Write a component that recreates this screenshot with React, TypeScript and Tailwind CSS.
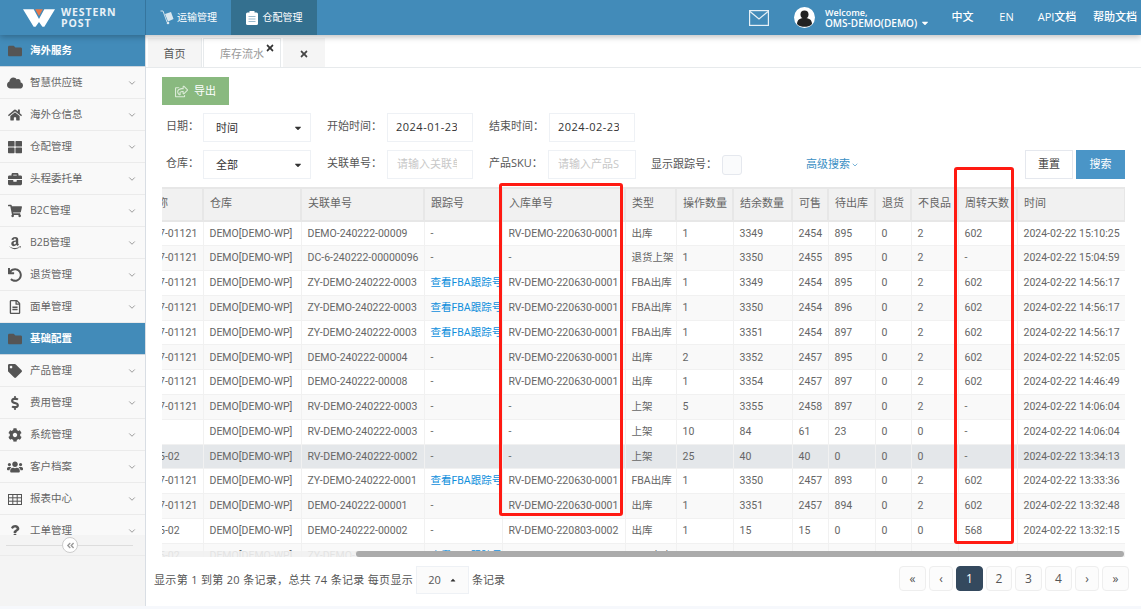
import {
  FaFolder,
  FaCloud,
  FaHome,
  FaThLarge,
  FaBriefcase,
  FaShoppingCart,
  FaAmazon,
  FaUndo,
  FaRegFileAlt,
  FaTag,
  FaDollarSign,
  FaCog,
  FaUsers,
  FaQuestion,
  FaTimes,
  FaCaretDown,
  FaCaretUp,
  FaRegShareSquare,
  FaAngleDoubleLeft,
} from "react-icons/fa";
import { ChevronDown } from "lucide-react";

const font = { fontFamily: '"Open Sans","Noto Sans CJK SC",sans-serif' };
const tableFont = { fontFamily: 'Roboto,"Noto Sans CJK SC",sans-serif' };

function GridIcon() {
  return (
    <svg width="14" height="11" viewBox="0 0 14 11" fill="none" stroke="#555" strokeWidth="1">
      <rect x="0.500" y="0.500" width="13" height="10" />
      <path d="M0 3.800H14M0 7.200H14M4.800 0V11M9.200 0V11" />
    </svg>
  );
}

const menuTop = [
  { label: "智慧供应链", icon: <FaCloud className="text-[16px]" /> },
  { label: "海外仓信息", icon: <FaHome /> },
  { label: "仓配管理", icon: <FaThLarge /> },
  { label: "头程委托单", icon: <FaBriefcase /> },
  { label: "B2C管理", icon: <FaShoppingCart /> },
  { label: "B2B管理", icon: <FaAmazon /> },
  { label: "退货管理", icon: <FaUndo /> },
  { label: "面单管理", icon: <FaRegFileAlt /> },
];

const menuBottom = [
  { label: "产品管理", icon: <FaTag /> },
  { label: "费用管理", icon: <FaDollarSign /> },
  { label: "系统管理", icon: <FaCog /> },
  { label: "客户档案", icon: <FaUsers className="text-[16px]" /> },
  { label: "报表中心", icon: <GridIcon /> },
  { label: "工单管理", icon: <FaQuestion className="text-[12px]" /> },
];

const columns = [
  { label: "名称", width: 41 },
  { label: "仓库", width: 98 },
  { label: "关联单号", width: 123 },
  { label: "跟踪号", width: 78 },
  { label: "入库单号", width: 123 },
  { label: "类型", width: 51 },
  { label: "操作数量", width: 57 },
  { label: "结余数量", width: 59 },
  { label: "可售", width: 36 },
  { label: "待出库", width: 47 },
  { label: "退货", width: 36 },
  { label: "不良品", width: 47 },
  { label: "周转天数", width: 59 },
  { label: "时间", width: 108 },
];

const fba = "查看FBA跟踪号";
const wh = "DEMO[DEMO-WP]";
const rv1 = "RV-DEMO-220630-0001";

const rows: string[][] = [
  ["7-01121", wh, "DEMO-240222-00009", "-", rv1, "出库", "1", "3349", "2454", "895", "0", "2", "602", "2024-02-22 15:10:25"],
  ["7-01121", wh, "DC-6-240222-00000096", "-", "-", "退货上架", "1", "3350", "2455", "895", "0", "2", "-", "2024-02-22 15:04:59"],
  ["7-01121", wh, "ZY-DEMO-240222-0003", fba, rv1, "FBA出库", "1", "3349", "2454", "895", "0", "2", "602", "2024-02-22 14:56:17"],
  ["7-01121", wh, "ZY-DEMO-240222-0003", fba, rv1, "FBA出库", "1", "3350", "2454", "896", "0", "2", "602", "2024-02-22 14:56:17"],
  ["7-01121", wh, "ZY-DEMO-240222-0003", fba, rv1, "FBA出库", "1", "3351", "2454", "897", "0", "2", "602", "2024-02-22 14:56:17"],
  ["7-01121", wh, "DEMO-240222-00004", "-", rv1, "出库", "2", "3352", "2457", "895", "0", "2", "602", "2024-02-22 14:52:05"],
  ["7-01121", wh, "DEMO-240222-00008", "-", rv1, "出库", "1", "3354", "2457", "897", "0", "2", "602", "2024-02-22 14:46:49"],
  ["7-01121", wh, "RV-DEMO-240222-0003", "-", "-", "上架", "5", "3355", "2458", "897", "0", "2", "-", "2024-02-22 14:06:04"],
  ["", wh, "RV-DEMO-240222-0003", "-", "-", "上架", "10", "84", "61", "23", "0", "0", "-", "2024-02-22 14:06:04"],
  ["5-02", wh, "RV-DEMO-240222-0002", "-", "-", "上架", "25", "40", "40", "0", "0", "0", "-", "2024-02-22 13:34:13"],
  ["7-01121", wh, "ZY-DEMO-240222-0001", fba, rv1, "FBA出库", "1", "3350", "2457", "893", "0", "2", "602", "2024-02-22 13:33:36"],
  ["7-01121", wh, "DEMO-240222-00001", "-", rv1, "出库", "1", "3351", "2457", "894", "0", "2", "602", "2024-02-22 13:32:48"],
  ["5-02", wh, "DEMO-240222-00002", "-", "RV-DEMO-220803-0002", "出库", "1", "15", "15", "0", "0", "0", "568", "2024-02-22 13:32:15"],
  ["5-02", wh, "ZY-DEMO-240221-0001", fba, "RV-DEMO-220803-0002", "FBA出库", "1", "16", "15", "0", "0", "0", "567", "2024-02-21 16:51:00"],
];

function MenuItem({ label, icon }: { label: string; icon: React.ReactNode }) {
  return (
    <div className="h-8 shrink-0 flex items-center pt-[1px] border-b border-[#ebebeb] text-[#666] text-[10.500px]">
      <span className="w-[30px] flex justify-center text-[14px] text-[#555]">{icon}</span>
      <span className="flex-1">{label}</span>
      <ChevronDown className="w-[10px] h-[10px] mr-[8px] text-[#888]" />
    </div>
  );
}

function MenuGroup({ label }: { label: string }) {
  return (
    <div className="h-8 shrink-0 flex items-center pt-[1px] bg-[#428bb9] text-white text-[10.500px] font-semibold border-b border-[#cdd6de]">
      <span className="w-[30px] flex justify-center text-[14px] text-[#555]">
        <FaFolder />
      </span>
      <span>{label}</span>
    </div>
  );
}

function PageButton({ label, active, width = "w-[27px]" }: { label: string; active?: boolean; width?: string }) {
  return (
    <span
      className={`h-[25px] flex items-center justify-center rounded-[4px] border text-[12px] ${width} ${
        active ? "bg-[#34495e] border-[#34495e] text-white" : "bg-[#fcfcfc] border-[#eeeeee] text-[#555]"
      }`}
    >
      {label}
    </span>
  );
}

export default function App() {
  return (
    <div className="h-screen w-full overflow-hidden bg-white flex flex-col relative" style={font}>
      {/* top bar */}
      <header className="h-[35px] shrink-0 bg-[#428bb9] flex items-center text-white shadow-[0_2px_6px_rgba(0,0,0,0.25)] relative z-10">
        <div className="w-[146px] h-full flex items-center pl-[23px] gap-[6px] border-r border-[#35759e]">
          <svg width="32" height="18" viewBox="0 0 33 18" className="shrink-0">
            <path d="M0 0H11L16.500 10L22 0H33L22 18H20L16.500 13L13 18H11Z" fill="#fff" />
            <path d="M12.500 0H20.500L16.500 7Z" fill="#e8784a" />
          </svg>
          <div className="text-[10.500px] font-bold leading-[11px] tracking-[0.9px] text-[#e8f1f7] pt-[1px]">
            <div>WESTERN</div>
            <div>POST</div>
          </div>
        </div>
        <div className="w-[85px] h-full flex items-center pl-[14px] gap-[3px] text-[10px]">
          <svg width="14" height="15" viewBox="0 0 14 15" className="shrink-0">
            <path d="M0.500 1H3L7 12" fill="none" stroke="#cfe1ec" strokeWidth="1" />
            <path d="M5 4L11 2L13.500 9L8 11.500Z" fill="#dbe8f0" />
            <circle cx="8" cy="13" r="1.300" fill="#dbe8f0" />
          </svg>
          <span>运输管理</span>
        </div>
        <div className="w-[86px] h-full flex items-center justify-center gap-[5px] text-[10px] bg-[#34708f]">
          <svg width="12" height="14" viewBox="0 0 12 14" className="shrink-0">
            <rect x="0" y="1.500" width="12" height="12.500" rx="1.500" fill="#fff" />
            <rect x="3.500" y="0" width="5" height="3" fill="#fff" />
            <path d="M2.500 5.500H9.500M2.500 8H9.500M2.500 10.500H9.500" stroke="#7fa8c0" strokeWidth="0.800" />
          </svg>
          <span>仓配管理</span>
        </div>
        <div className="flex-1" />
        <svg width="20" height="16" viewBox="0 0 20 16" fill="none" stroke="#e6f0f6" strokeWidth="1.200" className="mr-[25px] shrink-0">
          <rect x="0.600" y="0.600" width="18.800" height="14.800" />
          <path d="M1 1.500L10 9L19 1.500" />
        </svg>
        <svg width="21" height="21" viewBox="0 0 21 21" className="mr-[10px] shrink-0">
          <circle cx="10.500" cy="10.500" r="10.500" fill="#fff" />
          <circle cx="10.500" cy="7.500" r="4" fill="#222" />
          <path d="M3 17C3 12.500 6.500 11 10.500 11S18 12.500 18 17C16 19.500 13 19.800 10.500 19.800S5 19.500 3 17Z" fill="#222" />
        </svg>
        <div className="w-[114px] text-[10px] leading-[11px] font-semibold">
          <div className="text-[9px]">Welcome,</div>
          <div className="flex items-center gap-[3px] whitespace-nowrap">
            OMS-DEMO(DEMO)
            <FaCaretDown className="text-[10px]" />
          </div>
        </div>
        <span className="text-[11px] font-medium w-[47px] text-center">中文</span>
        <span className="text-[11px] font-medium ml-[9px] w-[23px] text-center">EN</span>
        <span className="text-[11px] font-medium ml-[18px] w-[42px] text-center whitespace-nowrap">API文档</span>
        <span className="text-[11px] font-medium ml-[14px] mr-[3px] w-[46px] text-center whitespace-nowrap">帮助文档</span>
      </header>

      <div className="flex-1 flex min-h-0">
        {/* side menu */}
        <aside className="w-[146px] shrink-0 bg-[#f4f4f4] border-r border-[#d9dee4] flex flex-col">
          <div className="h-[500px] shrink-0 overflow-hidden flex flex-col bg-[#f9f9f9]">
            <MenuGroup label="海外服务" />
            {menuTop.map((m) => (
              <MenuItem key={m.label} label={m.label} icon={m.icon} />
            ))}
            <MenuGroup label="基础配置" />
            {menuBottom.map((m) => (
              <MenuItem key={m.label} label={m.label} icon={m.icon} />
            ))}
          </div>
          <div className="h-[21px] relative flex items-center justify-center pr-[5px] border-b border-[#ebebeb]">
            <div className="absolute left-[6px] right-[12px] top-[10px] h-px bg-[#dddddd]" />
            <span className="relative w-[16px] h-[16px] rounded-full border border-[#cccccc] bg-white flex items-center justify-center text-[#999] text-[9px]">
              <FaAngleDoubleLeft />
            </span>
          </div>
        </aside>

        {/* main */}
        <main className="flex-1 min-w-0 flex flex-col">
          {/* tabs */}
          <div className="h-[33px] shrink-0 flex items-end border-b border-[#e7eaec] text-[11px] pl-[2px]">
            <div className="w-[54px] h-[29px] pt-[3px] bg-[#f5f5f5] border-r border-[#e7eaec] flex items-center justify-center text-[#555]">
              首页
            </div>
            <div className="w-[78px] h-[29px] pt-[3px] ml-[1px] bg-white border-x border-t border-[#e7eaec] relative flex items-center justify-center text-[#999]">
              库存流水
              <FaTimes className="absolute right-[5px] top-[4px] text-[10px] text-[#333]" />
            </div>
            <div className="w-[42px] h-[29px] pt-[3px] ml-[2px] bg-[#f5f5f5] flex items-center justify-center">
              <FaTimes className="text-[10px] text-[#444]" />
            </div>
          </div>

          <div className="flex-1 min-h-0 flex flex-col pl-[16px] pr-[16px]">
            <div className="h-[28px] w-[67px] mt-[9px] bg-[#89b97f] text-white text-[11px] flex items-center justify-center gap-[6px]">
              <FaRegShareSquare className="text-[13px] text-[#dcebd8]" />
              导出
            </div>

            {/* filters */}
            <div className="flex items-center mt-[8px] h-[29px] text-[11px] text-[#555]">
              <span className="w-[41px] pl-[4px] pb-[2px]">日期：</span>
              <div className="w-[108px] h-[29px] pt-[1px] border border-[#eef1f5] flex items-center justify-between pl-[12px] pr-[7px] text-[#333]">
                时间
                <FaCaretDown className="text-[10px] text-[#333]" />
              </div>
              <span className="ml-[16px] w-[60px] pb-[2px]">开始时间：</span>
              <div className="w-[86px] h-[29px] border border-[#eef1f5] flex items-center pl-[8px] text-[#333]">
                <span className="w-[61px] overflow-hidden whitespace-nowrap tracking-[0.5px]">2024-01-23</span>
              </div>
              <span className="ml-[16px] w-[60px] pb-[2px]">结束时间：</span>
              <div className="w-[86px] h-[29px] border border-[#eef1f5] flex items-center pl-[8px] text-[#333]">
                <span className="w-[61px] overflow-hidden whitespace-nowrap tracking-[0.5px]">2024-02-23</span>
              </div>
            </div>
            <div className="flex items-center mt-[8px] h-[29px] text-[11px] text-[#555]">
              <span className="w-[41px] pl-[4px] pb-[2px]">仓库：</span>
              <div className="w-[108px] h-[29px] pt-[1px] border border-[#eef1f5] flex items-center justify-between pl-[12px] pr-[7px] text-[#333]">
                全部
                <FaCaretDown className="text-[10px] text-[#333]" />
              </div>
              <span className="ml-[16px] w-[60px] pb-[2px]">关联单号：</span>
              <div className="w-[86px] h-[29px] border border-[#eef1f5] flex items-center pl-[9px] text-[#c8c8c8]">
                <span className="w-[60px] overflow-hidden whitespace-nowrap">请输入关联单号</span>
              </div>
              <span className="ml-[16px] w-[59px] whitespace-nowrap pb-[2px]">产品SKU：</span>
              <div className="w-[88px] h-[29px] border border-[#eef1f5] flex items-center pl-[9px] text-[#c8c8c8]">
                <span className="w-[61px] overflow-hidden whitespace-nowrap">请输入产品SKU</span>
              </div>
              <span className="ml-[15px] w-[71px] whitespace-nowrap">显示跟踪号：</span>
              <span className="w-[20px] h-[20px] rounded-[3px] border border-[#e5e8ee] bg-[#fafbfc]" />
              <span className="ml-[64px] text-[#3a8fc4] flex items-center gap-[1px]">
                高级搜索
                <ChevronDown className="w-[8px] h-[8px]" />
              </span>
              <div className="flex-1" />
              <span className="w-[48px] h-[29px] border border-[#e5e8ee] flex items-center justify-center text-[#444]">
                重置
              </span>
              <span className="w-[49px] h-[29px] ml-[3px] bg-[#4a95c7] flex items-center justify-center text-white">
                搜索
              </span>
            </div>

            {/* table */}
            <div className="relative mt-[8px] h-[370px] w-[963px] overflow-hidden" style={tableFont}>
              <table className="table-fixed border-collapse text-[10.500px] text-[#666] w-[963px]">
                <colgroup>
                  {columns.map((c) => (
                    <col key={c.label} style={{ width: c.width }} />
                  ))}
                </colgroup>
                <thead>
                  <tr className="h-[33px] bg-[#f1f1f1]">
                    {columns.map((c, i) => (
                      <th
                        key={c.label}
                        className={`font-normal text-[11px] text-left whitespace-nowrap overflow-hidden border-r-2 border-y-2 border-[#e7e7e7] ${
                          i === 0 ? "" : "pl-[6px]"
                        }`}
                      >
                        {i === 0 ? <div className="-ml-[16px]">{c.label}</div> : c.label}
                      </th>
                    ))}
                  </tr>
                </thead>
                <tbody>
                  {rows.map((row, ri) => (
                    <tr
                      key={ri}
                      className={`h-[24.800px] ${ri === 9 ? "bg-[#e4e7ea]" : ri % 2 === 1 ? "bg-[#f9f9f9]" : "bg-white"}`}
                    >
                      {row.map((cell, ci) => (
                        <td
                          key={ci}
                          className={`whitespace-nowrap overflow-hidden border-r border-b border-[#f1f1f1] ${
                            ci === 0 ? "" : "pl-[6px]"
                          } ${cell === fba ? "text-[#0f8fdc]" : ""}`}
                        >
                          {ci === 0 ? <div className="-ml-[3px]">{cell}</div> : cell}
                        </td>
                      ))}
                    </tr>
                  ))}
                </tbody>
              </table>
              {/* scrollbar */}
              <div className="absolute left-0 right-0 bottom-0 h-[6px] bg-[#f1f1f1]/90">
                <div className="absolute left-[194px] right-[1px] top-0 bottom-0 rounded-[3px] bg-[#ababab]" />
              </div>
            </div>

            {/* pagination */}
            <div className="flex items-center mt-[9px] -ml-[8px] -mr-[4px] text-[11px] text-[#555]">
              <span className="tracking-[0.32px]">显示第 1 到第 20 条记录，总共 74 条记录 每页显示</span>
              <span className="w-[53px] h-[28px] mx-[3px] bg-[#fbfbfb] border border-[#eef1f5] flex items-center justify-center gap-[8px]">
                20
                <FaCaretUp className="text-[8px] text-[#333]" />
              </span>
              <span>条记录</span>
              <div className="flex-1" />
              <div className="flex gap-[3px] mb-[3px]">
                <PageButton label="«" />
                <PageButton label="‹" width="w-[24px]" />
                <PageButton label="1" active />
                <PageButton label="2" width="w-[26px]" />
                <PageButton label="3" />
                <PageButton label="4" />
                <PageButton label="›" width="w-[24px]" />
                <PageButton label="»" />
              </div>
            </div>
          </div>
        </main>
      </div>
      <div className="h-[3px] shrink-0 bg-[#f6f8fc]" />

      {/* annotation boxes */}
      <div className="absolute left-[499px] top-[183px] w-[124px] h-[333px] border-[3px] border-[#ff1a12] rounded-[3px] pointer-events-none" />
      <div className="absolute left-[954px] top-[167px] w-[60px] h-[377px] border-[3px] border-[#ff1a12] rounded-[3px] pointer-events-none" />
    </div>
  );
}
